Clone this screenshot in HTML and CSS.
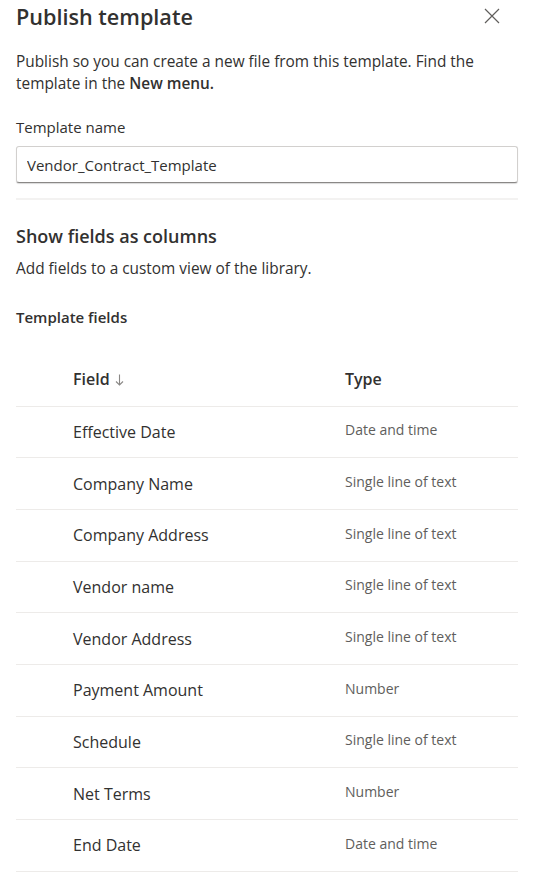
FILE: index.html
```html
<!DOCTYPE html>
<html lang="en">

<head>
    <meta charset="UTF-8">
    <meta name="viewport" content="width=device-width, initial-scale=1.0">
    <title>Publish template</title>
    <link rel="stylesheet" href="styles.css">
</head>

<body>
    <div class="panel">
        <div class="panel-header">
            <h1>Publish template</h1>
            <button class="close-btn" aria-label="Close">
                <svg width="16" height="16" viewBox="0 0 16 16">
                    <path d="M1 1 L15 15 M15 1 L1 15" stroke="#605e5c" stroke-width="1.2" fill="none" />
                </svg>
            </button>
        </div>

        <p class="intro">Publish so you can create a new file from this template. Find the template in the <strong>New menu.</strong></p>

        <label class="field-label" for="templateName">Template name</label>
        <input class="text-input" id="templateName" type="text" value="Vendor_Contract_Template">

        <div class="divider"></div>

        <h2>Show fields as columns</h2>
        <p class="sub">Add fields to a custom view of the library.</p>

        <h3>Template fields</h3>

        <!-- Field list -->
        <div class="fields-table">
            <div class="row head">
                <div class="col-name">Field
                    <svg class="sort" width="9" height="12" viewBox="0 0 9 12">
                        <path d="M4.5 0.5 V11 M1 7.5 L4.5 11 L8 7.5" stroke="#8a8886" stroke-width="1.1" fill="none" />
                    </svg>
                </div>
                <div class="col-type">Type</div>
            </div>
            <div class="row">
                <div class="col-name">Effective Date</div>
                <div class="col-type">Date and time</div>
            </div>
            <div class="row">
                <div class="col-name">Company Name</div>
                <div class="col-type">Single line of text</div>
            </div>
            <div class="row">
                <div class="col-name">Company Address</div>
                <div class="col-type">Single line of text</div>
            </div>
            <div class="row">
                <div class="col-name">Vendor name</div>
                <div class="col-type">Single line of text</div>
            </div>
            <div class="row">
                <div class="col-name">Vendor Address</div>
                <div class="col-type">Single line of text</div>
            </div>
            <div class="row">
                <div class="col-name">Payment Amount</div>
                <div class="col-type">Number</div>
            </div>
            <div class="row">
                <div class="col-name">Schedule</div>
                <div class="col-type">Single line of text</div>
            </div>
            <div class="row">
                <div class="col-name">Net Terms</div>
                <div class="col-type">Number</div>
            </div>
            <div class="row">
                <div class="col-name">End Date</div>
                <div class="col-type">Date and time</div>
            </div>
        </div>
    </div>
</body>

</html>
```

FILE: styles.css
```css
/* Side panel layout */
body {
    margin: 0;
    background-color: #fff;
    font-family: 'Open Sans', 'Noto Sans', sans-serif;
    color: #323130;
}

.panel {
    padding: 0 20px 0 16px;
    display: flex;
    flex-direction: column;
}

.panel-header {
    display: flex;
    justify-content: space-between;
    align-items: center;
    height: 32px;
}

h1 {
    margin: 0;
    font-size: 21.6px;
    font-weight: 600;
}

.close-btn {
    border: none;
    background: none;
    padding: 0;
    margin-right: 18px;
    width: 16px;
    height: 16px;
    cursor: pointer;
}

.intro {
    margin: 19px 0 0;
    font-size: 15.4px;
    line-height: 22px;
}

.intro strong {
    font-weight: 600;
}

.field-label {
    margin-top: 22px;
    font-size: 15px;
    line-height: 20px;
}

.text-input {
    margin-top: 9px;
    height: 37px;
    box-sizing: border-box;
    border: 1px solid #d2d0ce;
    border-bottom-color: #8a8886;
    border-radius: 3px;
    padding: 0 10px;
    font-family: inherit;
    font-size: 15px;
    color: #323130;
    box-shadow: 0 1px 1px rgba(0, 0, 0, 0.15);
}

.divider {
    margin-top: 15px;
    height: 2px;
    background-color: #f3f2f1;
}

h2 {
    margin: 24px 0 0;
    font-size: 18px;
    font-weight: 600;
    line-height: 24px;
}

.sub {
    margin: 10px 0 0;
    font-size: 15.4px;
    line-height: 22px;
}

h3 {
    margin: 26px 0 0;
    font-size: 15px;
    font-weight: 600;
    line-height: 22px;
}

/* Template field rows */
.fields-table {
    margin-top: 27px;
}

.row {
    display: grid;
    grid-template-columns: 272px 1fr;
    align-items: center;
    height: 51.67px;
    box-sizing: border-box;
    border-bottom: 1px solid #edebe9;
    padding-left: 57px;
}

.col-name {
    font-size: 16px;
}

.col-type {
    font-size: 14px;
    color: #605e5c;
    margin-top: -4px;
}

.head .col-name,
.head .col-type {
    font-size: 16px;
    font-weight: 600;
    color: #323130;
    margin-top: -2px;
}

.sort {
    margin-left: 1px;
    vertical-align: -1px;
}
```
